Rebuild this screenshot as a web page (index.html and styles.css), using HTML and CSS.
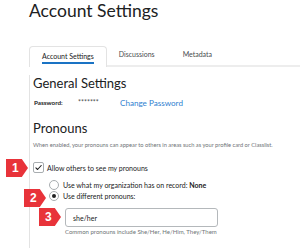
FILE: index.html
```html
<!DOCTYPE html>
<html>
<head>
<meta charset="utf-8">
<link rel="stylesheet" href="styles.css">
</head>
<body>
<div class="page">
  <h1 class="title">Account Settings</h1>
  <div class="tabs">
    <div class="tab active"><span class="tab-label">Account Settings</span></div>
    <div class="tab"><span class="tab-label">Discussions</span></div>
    <div class="tab"><span class="tab-label">Metadata</span></div>
    <div class="tab-fill"></div>
  </div>
  <div class="panel">
    <h2 class="section">General Settings</h2>
    <div class="pw-row">
      <span class="pw-label">Password:</span>
      <span class="pw-stars">*******</span>
      <a class="link">Change Password</a>
    </div>
    <h2 class="section pronouns">Pronouns</h2>
    <p class="desc">When enabled, your pronouns can appear to others in areas such as your profile card or Classlist.</p>
    <div class="check-row">
      <span class="checkbox"><svg width="9" height="9" viewBox="0 0 9 9"><path d="M1.9 4.8 L3.6 6.5 L7.2 2.5" fill="none" stroke="#202122" stroke-width="1.1" stroke-linecap="round" stroke-linejoin="round"/></svg></span>
      <span>Allow others to see my pronouns</span>
    </div>
    <div class="radios">
      <div class="radio-row"><span class="radio"></span><span>Use what my organization has on record: <b>None</b></span></div>
      <div class="radio-row"><span class="radio on"></span><span>Use different pronouns:</span></div>
    </div>
    <div class="field">
      <div class="input">she/her</div>
      <div class="hint">Common pronouns include She/Her, He/Him, They/Them</div>
    </div>
  </div>
  <span class="badge b1">1</span>
  <span class="badge b2">2</span>
  <span class="badge b3">3</span>
</div>
</body>
</html>
```
FILE: styles.css
```css
html, body {
  margin: 0;
  padding: 0;
  background: #ffffff;
}
body {
  font-family: Lato, "Open Sans", sans-serif;
  color: #202122;
  width: 300px;
  height: 248px;
  overflow: hidden;
}
.page {
  position: relative;
  padding-left: 29px;
  height: 248px;
  box-sizing: border-box;
}
.title {
  margin: 0;
  height: 46px;
  box-sizing: border-box;
  padding-top: 2px;
  font-size: 17.5px;
  line-height: 18px;
  font-weight: 400;
  color: #202122;
}
.tabs {
  display: flex;
  height: 21px;
}
.tab {
  height: 21px;
  box-sizing: border-box;
  padding: 0 16px 3px 12px;
  display: flex;
  align-items: flex-end;
  border-bottom: 2px solid #ededed;
}
.tab.active {
  padding: 0 12px 3px;
  border: 1px solid #e3e3e3;
  border-bottom: none;
  border-radius: 4px 4px 0 0;
}
.tab-fill {
  flex: 1;
  border-bottom: 2px solid #ededed;
}
.tab-label {
  font-size: 7px;
  line-height: 9px;
  padding-bottom: 1px;
  border-bottom: 2px solid transparent;
  color: #494c4e;
}
.tab.active .tab-label {
  border-bottom-color: #1a73c4;
  color: #202122;
}
.panel {
  border-left: 1px solid #e3e3e3;
  padding-left: 3px;
  height: 181px;
}
.section {
  margin: 8px 0 0;
  font-size: 13px;
  line-height: 16px;
  font-weight: 400;
  color: #202122;
}
.section.pronouns {
  margin-top: 12px;
}
.pw-row {
  margin-top: 6.5px;
  display: flex;
  align-items: center;
  height: 10px;
  padding-left: 1px;
}
.pw-label {
  width: 44px;
  font-size: 6.3px;
  font-weight: 700;
  color: #202122;
}
.pw-stars {
  width: 42px;
  font-size: 7px;
  color: #494c4e;
  position: relative;
  top: -1px;
}
.link {
  font-size: 8.1px;
  color: #2f7fd0;
}
.desc {
  margin: 5.7px 0 0;
  font-size: 5.7px;
  line-height: 8px;
  color: #6e7376;
}
.check-row {
  margin-top: 12.5px;
  height: 12px;
  display: flex;
  align-items: center;
  gap: 3px;
  font-size: 7px;
  color: #202122;
}
.checkbox {
  width: 11px;
  height: 11px;
  box-sizing: border-box;
  border: 1px solid #a8adb0;
  border-radius: 2px;
  display: flex;
  align-items: center;
  justify-content: center;
}
.radios {
  margin-top: 6px;
  padding-left: 16px;
}
.radio-row {
  height: 11px;
  display: flex;
  align-items: center;
  gap: 4px;
  font-size: 7px;
  color: #202122;
}
.radio {
  width: 10px;
  height: 10px;
  box-sizing: border-box;
  border: 1px solid #a8adb0;
  border-radius: 50%;
  display: flex;
  align-items: center;
  justify-content: center;
}
.radio.on::after {
  content: "";
  width: 4px;
  height: 4px;
  border-radius: 50%;
  background: #202122;
}
.field {
  margin-top: 6.5px;
  margin-left: 32px;
}
.input {
  width: 153px;
  height: 19px;
  box-sizing: border-box;
  border: 1px solid #b4b8bb;
  border-radius: 3px;
  padding-left: 7px;
  display: flex;
  align-items: center;
  font-size: 7px;
  color: #202122;
}
.hint {
  margin-top: 0.5px;
  font-size: 6px;
  line-height: 7px;
  color: #6e7376;
}
.badge {
  position: absolute;
  width: 22px;
  height: 18px;
  background: #e8333a;
  clip-path: polygon(0 0, 72% 0, 100% 50%, 72% 100%, 0 100%);
  color: #ffffff;
  font-family: "Liberation Sans", Arial, sans-serif;
  font-weight: 700;
  font-size: 12px;
  line-height: 18px;
  box-sizing: border-box;
  padding-left: 6px;
}
.b1 { left: 6px; top: 159px; }
.b2 { left: 24px; top: 189px; }
.b3 { left: 39px; top: 208px; }
```
